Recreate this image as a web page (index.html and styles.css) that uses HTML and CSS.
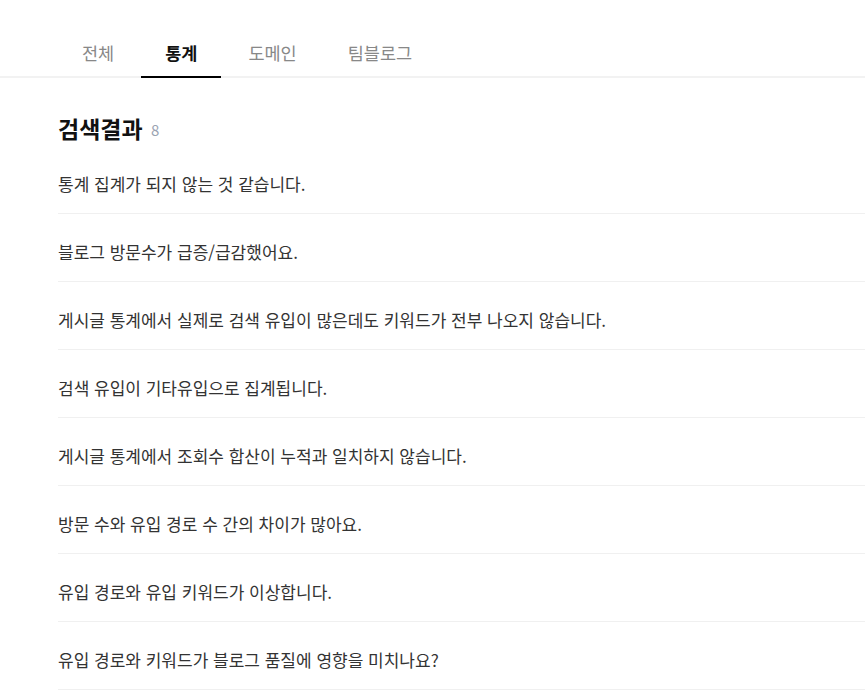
FILE: index.html
```html
<!DOCTYPE html>
<html lang="ko">
<head>
  <meta charset="UTF-8" />
  <title>검색결과</title>
  <link rel="stylesheet" href="styles.css">
</head>
<body>
  <nav class="tabs">
    <a href="#" class="tab">전체</a>
    <a href="#" class="tab active">통계</a>
    <a href="#" class="tab">도메인</a>
    <a href="#" class="tab">팀블로그</a>
  </nav>

  <main>
    <h2 class="result-title">검색결과 <span class="count">8</span></h2>
    <ul class="result-list">
      <li><a href="#">통계 집계가 되지 않는 것 같습니다.</a></li>
      <li><a href="#">블로그 방문수가 급증/급감했어요.</a></li>
      <li><a href="#">게시글 통계에서 실제로 검색 유입이 많은데도 키워드가 전부 나오지 않습니다.</a></li>
      <li><a href="#">검색 유입이 기타유입으로 집계됩니다.</a></li>
      <li><a href="#">게시글 통계에서 조회수 합산이 누적과 일치하지 않습니다.</a></li>
      <li><a href="#">방문 수와 유입 경로 수 간의 차이가 많아요.</a></li>
      <li><a href="#">유입 경로와 유입 키워드가 이상합니다.</a></li>
      <li><a href="#">유입 경로와 키워드가 블로그 품질에 영향을 미치나요?</a></li>
    </ul>
  </main>
</body>
</html>
```

FILE: styles.css
```css
body {
  margin: 0;
  font-family: "Noto Sans CJK KR", "Noto Sans", sans-serif;
  background: #fff;
  color: #222;
}

.tabs {
  display: flex;
  gap: 3px;
  padding-left: 58px;
  border-bottom: 2px solid #f2f2f2;
}

.tabs .tab {
  display: block;
  padding: 30px 24px 0;
  height: 46px;
  line-height: 46px;
  font-size: 17.5px;
  color: #888;
  text-decoration: none;
}

.tabs .tab.active {
  color: #111;
  font-weight: bold;
  border-bottom: 2px solid #000;
  margin-bottom: -2px;
}

main {
  padding: 35px 0 0 58px;
}

.result-title {
  margin: 0 0 3px;
  font-size: 23px;
  line-height: 30px;
  font-weight: bold;
  color: #111;
}

.result-title .count {
  margin-left: 2px;
  font-size: 15px;
  line-height: 0;
  font-weight: normal;
  color: #9aa3b2;
  vertical-align: 2px;
}

.result-list {
  list-style: none;
  margin: 0;
  padding: 0;
}

.result-list li {
  padding: 26px 0 17px;
  line-height: 24px;
  border-bottom: 1px solid #f0f0f0;
}

.result-list a {
  font-size: 17px;
  color: #333;
  text-decoration: none;
}
```
